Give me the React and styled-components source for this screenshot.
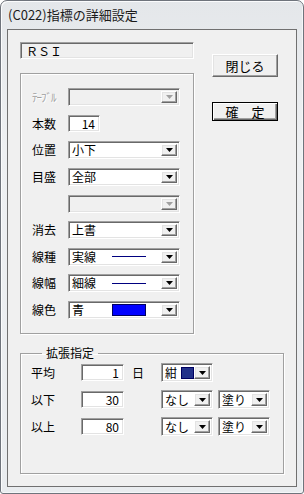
import React from 'react';
import styled, { createGlobalStyle, css } from 'styled-components';

const GlobalStyle = createGlobalStyle`
  body {
    margin: 0;
    background: #ffffff;
    font-family: "Noto Sans CJK JP", "Liberation Sans", sans-serif;
  }
`

const Window = styled.div`
  width: 304px;
  height: 494px;
  box-sizing: border-box;
  padding: 28px 6px 6px 6px;
  border: 1px solid #6f747c;
  border-radius: 7px 7px 3px 3px;
  background: linear-gradient(180deg, #e4e7ea 0%, #eef0f2 30%, #e9ecef 100%);
  box-shadow: inset 1px 1px 0 #fbfcfd, inset -1px -1px 0 #f4f6f8;
  display: flex;
  flex-direction: column;
`

const Caption = styled.div`
  height: 28px;
  margin-top: -28px;
  display: flex;
  align-items: center;
  padding-left: 1px;
  font-size: 13px;
  line-height: 16px;
  color: #1b1b1b;
`

const Client = styled.div`
  flex: 1;
  border: 1px solid #707070;
  background: #f0f0f0;
  padding: 12px 0 0 12px;
  box-sizing: border-box;
  font-size: 12px;
  line-height: 14px;
  color: #000;
`

const TopRow = styled.div`
  display: flex;
  align-items: flex-start;
`

const LeftCol = styled.div`
  width: 174px;
  display: flex;
  flex-direction: column;
  gap: 14px;
`

const RightCol = styled.div`
  margin-left: 18px;
  margin-top: 12px;
  display: flex;
  flex-direction: column;
  gap: 25px;
`

const sunken = css`
  box-sizing: border-box;
  border: 1px solid;
  border-color: #a0a0a0 #ffffff #ffffff #a0a0a0;
  box-shadow: inset 1px 1px 0 #696969, inset -1px -1px 0 #e3e3e3;
`

const raised = css`
  box-sizing: border-box;
  border: 1px solid;
  border-color: #ffffff #696969 #696969 #ffffff;
  box-shadow: inset -1px -1px 0 #a0a0a0, inset 1px 1px 0 #e3e3e3;
  background: #f0f0f0;
`

const NameBox = styled.div`
  ${sunken};
  height: 17px;
  background: #f0f0f0;
  padding: 1px 0 0 5px;
  font-size: 12px;
  line-height: 14px;
`

const Group = styled.div`
  box-sizing: border-box;
  height: 261px;
  border: 1px solid #a0a0a0;
  box-shadow: inset 1px 1px 0 #fff, 1px 1px 0 #fff;
  padding: 14px 0 0 11px;
  display: grid;
  grid-template-columns: 36px 112px;
  grid-auto-rows: 18px;
  row-gap: 8.625px;
  align-items: center;
`

const Label = styled.span`
  white-space: nowrap;
  ${p => p.$disabled && css`
    color: #a0a0a0;
    text-shadow: 1px 1px 0 #fff;
    font-size: 11px;
    letter-spacing: -1px;
  `}
`

const ComboBox = styled.div`
  ${sunken};
  width: ${p => p.$w}px;
  height: ${p => p.$h || 18}px;
  background: ${p => (p.$disabled ? '#f0f0f0' : '#ffffff')};
  padding: 2px;
  display: flex;
  align-items: stretch;
`

const ComboValue = styled.div`
  flex: 1;
  display: flex;
  align-items: center;
  padding-left: 1px;
  white-space: nowrap;
  min-width: 0;
`

const ValueText = styled.span`
  width: ${p => p.$w || 'auto'};
  flex-shrink: 0;
  line-height: 14px;
`

const DropButton = styled.div`
  ${raised};
  width: 16px;
  flex-shrink: 0;
  display: flex;
  align-items: center;
  justify-content: center;
  color: ${p => (p.$disabled ? '#a0a0a0' : '#000')};
`

const LineSample = styled.span`
  width: 34px;
  height: 1px;
  background: #000080;
`

const Swatch = styled.span`
  box-sizing: border-box;
  width: ${p => p.$w}px;
  height: 12px;
  background: ${p => p.$color};
  border: 1px solid #000060;
  margin-left: ${p => p.$ml || 0}px;
`

const EditBox = styled.div`
  ${sunken};
  width: ${p => p.$w}px;
  height: ${p => p.$h || 17}px;
  background: #fff;
  text-align: right;
  padding: 1px 4px 0 0;
  line-height: 14px;
`

const Button = styled.div`
  ${raised};
  width: 66px;
  height: ${p => p.$h}px;
  display: flex;
  align-items: center;
  justify-content: center;
  font-size: 13px;
  ${p => p.$default && css`
    border: 1px solid #000;
    box-shadow: inset 1px 1px 0 #fff, inset -1px -1px 0 #696969, inset -2px -2px 0 #a0a0a0;
  `}
`

const ExtGroup = styled.fieldset`
  margin: 12px 0 0 0;
  width: 264px;
  height: 128px;
  box-sizing: border-box;
  border: 1px solid #a0a0a0;
  box-shadow: inset 1px 1px 0 #fff, 1px 1px 0 #fff;
  padding: 3px 0 0 10px;
  min-width: 0;
  display: flex;
  flex-direction: column;
  gap: 8px;
`

const Legend = styled.legend`
  margin-left: 11px;
  padding: 0 4px;
  font-size: 12px;
  line-height: 14px;
`

const ExtRow = styled.div`
  display: flex;
  align-items: center;
  height: 19px;
`

const ExtLabel = styled.span`
  width: 50px;
`

const Unit = styled.span`
  width: 37px;
  padding-left: 8px;
  box-sizing: border-box;
`

const Gap = styled.span`
  width: ${p => p.$w}px;
`

const Arrow = () => (
  <svg width="7" height="4" viewBox="0 0 7 4" style={{ display: 'block' }}>
    <path d="M0 0h7L3.5 4z" fill="currentColor" />
  </svg>
)

function Combo({ w, h, disabled, children }) {
  return (
    <ComboBox $w={w} $h={h} $disabled={disabled}>
      <ComboValue>{children}</ComboValue>
      <DropButton $disabled={disabled}><Arrow /></DropButton>
    </ComboBox>
  )
}

const rows = [
  { label: '位置', value: '小下' },
  { label: '目盛', value: '全部' },
  { label: '', value: '', disabled: true },
  { label: '消去', value: '上書' },
  { label: '線種', value: '実線', line: true },
  { label: '線幅', value: '細線', line: true },
  { label: '線色', value: '青', color: '#0000ff' },
]

const ext = [
  { label: '以下', value: '30' },
  { label: '以上', value: '80' },
]

export default function App() {
  return (
    <>
      <GlobalStyle />
      <Window>
        <Caption>(C022)指標の詳細設定</Caption>
        <Client>
          <TopRow>
            <LeftCol>
              <NameBox>ＲＳＩ</NameBox>
              <Group>
                <Label $disabled>ﾃｰﾌﾞﾙ</Label>
                <Combo w={112} disabled />
                <Label>本数</Label>
                <EditBox $w={32}>14</EditBox>
                {rows.map((r, i) => (
                  <React.Fragment key={i}>
                    <Label>{r.label}</Label>
                    <Combo w={112} disabled={r.disabled}>
                      <ValueText $w={r.line || r.color ? '40px' : 'auto'}>{r.value}</ValueText>
                      {r.line && <LineSample />}
                      {r.color && <Swatch $w={34} $color={r.color} />}
                    </Combo>
                  </React.Fragment>
                ))}
              </Group>
            </LeftCol>
            <RightCol>
              <Button $h={23}>閉じる</Button>
              <Button $h={19} $default>確　定</Button>
            </RightCol>
          </TopRow>
          <ExtGroup>
            <Legend>拡張指定</Legend>
            <ExtRow>
              <ExtLabel>平均</ExtLabel>
              <EditBox $w={43}>1</EditBox>
              <Unit>日</Unit>
              <Combo w={52} h={19}>
                <ValueText>紺</ValueText>
                <Swatch $w={13} $color="#22318a" $ml={4} />
              </Combo>
            </ExtRow>
            {ext.map(r => (
              <ExtRow key={r.label}>
                <ExtLabel>{r.label}</ExtLabel>
                <EditBox $w={43}>{r.value}</EditBox>
                <Unit />
                <Combo w={52} h={19}><ValueText>なし</ValueText></Combo>
                <Gap $w={5} />
                <Combo w={52} h={19}><ValueText>塗り</ValueText></Combo>
              </ExtRow>
            ))}
          </ExtGroup>
        </Client>
      </Window>
    </>
  )
}
